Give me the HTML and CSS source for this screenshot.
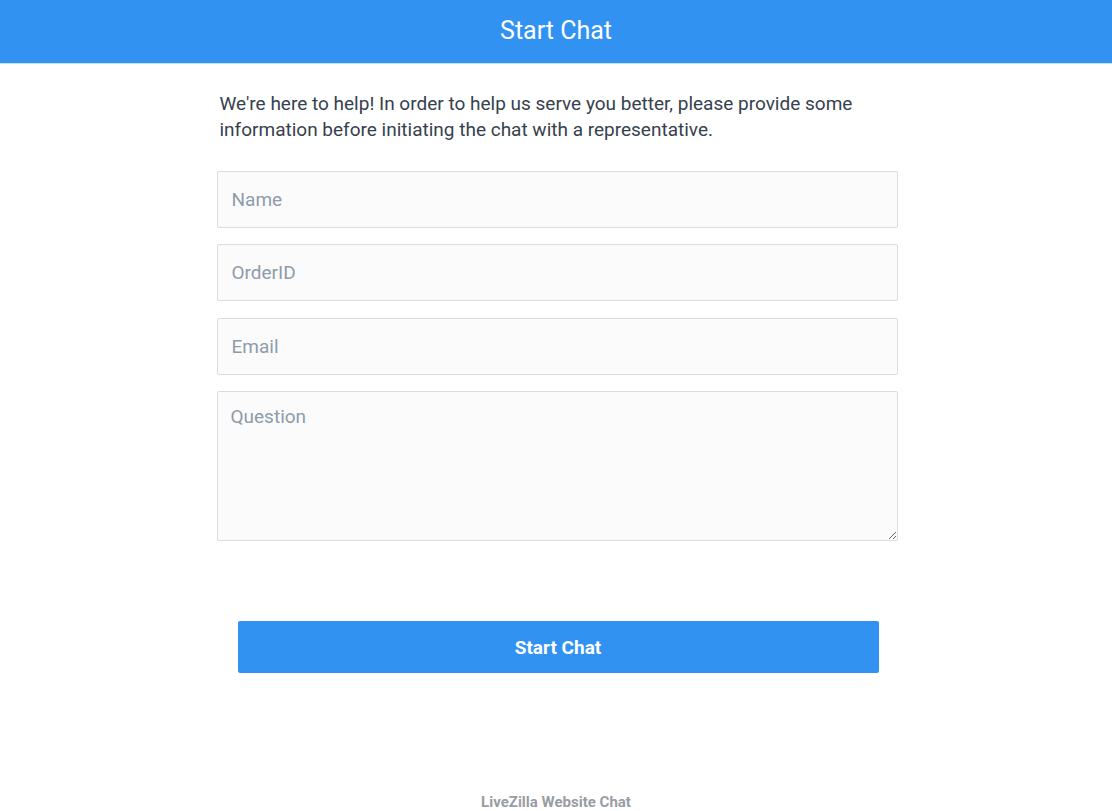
FILE: index.html
```html
<!DOCTYPE html>
<html lang="en">
<head>
<meta charset="utf-8">
<title>Start Chat</title>
<link rel="stylesheet" href="styles.css">
</head>
<body>
<header class="topbar">Start Chat</header>
<main class="content">
  <p class="intro">We're here to help! In order to help us serve you better, please provide some information before initiating the chat with a representative.</p>
  <form class="form">
    <input class="field" type="text" placeholder="Name">
    <input class="field" type="text" placeholder="OrderID">
    <input class="field" type="text" placeholder="Email">
    <textarea class="field area" placeholder="Question"></textarea>
    <button class="btn" type="button">Start Chat</button>
  </form>
</main>
<footer class="foot">LiveZilla Website Chat</footer>
</body>
</html>
```
FILE: styles.css
```css
html, body {
  margin: 0;
  padding: 0;
  background: #ffffff;
  font-family: Roboto, "Liberation Sans", sans-serif;
}
body {
  height: 811px;
  overflow: hidden;
  display: flex;
  flex-direction: column;
}
.topbar {
  height: 63px;
  background: #3192f1;
  border-bottom: 1px solid #c9e0f8;
  color: #ffffff;
  font-size: 25px;
  line-height: 62px;
  text-align: center;
}
.content {
  width: 681px;
  margin: 0 auto;
  padding-left: 2px;
}
.intro {
  margin: 27px 0 28px 3px;
  font-size: 19px;
  line-height: 26px;
  color: #36414d;
}
.form {
  display: flex;
  flex-direction: column;
  gap: 16.4px;
}
.field {
  box-sizing: border-box;
  width: 681px;
  height: 57px;
  margin: 0;
  border: 1px solid #dcdcdc;
  border-radius: 2px;
  background: #fbfbfb;
  padding: 0 14px;
  font-family: Roboto, "Liberation Sans", sans-serif;
  font-size: 19px;
  color: #333;
  outline: none;
}
.field::placeholder {
  color: #8e9bab;
}
.area {
  height: 150px;
  padding: 13px 13px;
  resize: vertical;
}
.btn {
  align-self: flex-start;
  width: 641px;
  height: 52px;
  margin: 63.5px 0 0 21px;
  border: none;
  border-radius: 2px;
  background: #3192f1;
  color: #ffffff;
  font-family: Roboto, "Liberation Sans", sans-serif;
  font-size: 19px;
  font-weight: 700;
  cursor: pointer;
}
.foot {
  margin-top: auto;
  height: 21px;
  text-align: center;
  font-size: 15px;
  font-weight: 700;
  color: #999da3;
  line-height: 24px;
}
```
